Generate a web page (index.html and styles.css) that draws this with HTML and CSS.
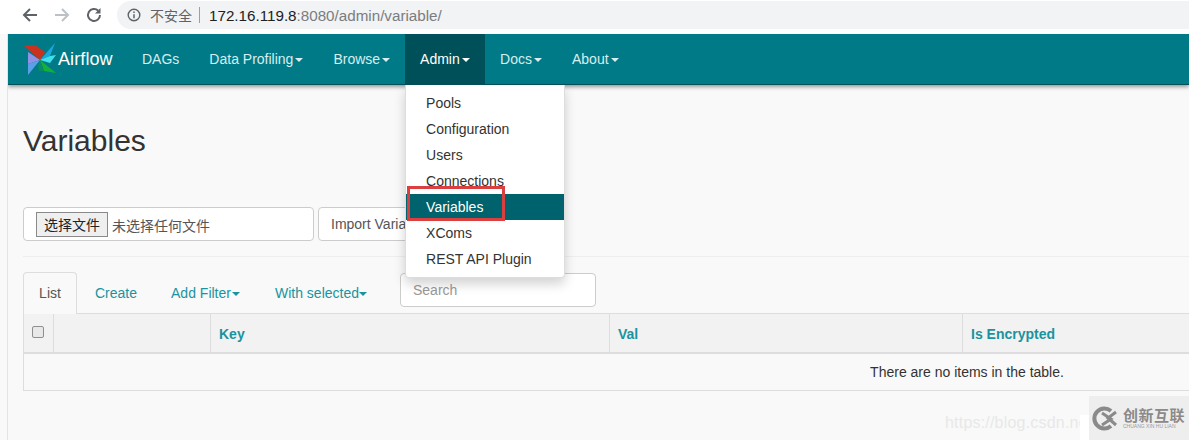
FILE: index.html
```html
<!DOCTYPE html>
<html lang="en">
<head>
<meta charset="utf-8">
<title>Airflow Variables</title>
<link rel="stylesheet" href="styles.css">
</head>
<body>
<header class="chrome">
  <svg class="cicon" width="18" height="18" viewBox="0 0 18 18"><path d="M16 9H3M9 3L3 9l6 6" fill="none" stroke="#5f6368" stroke-width="2"/></svg>
  <svg class="cicon" width="18" height="18" viewBox="0 0 18 18"><path d="M2 9h13M9 3l6 6-6 6" fill="none" stroke="#bdc1c6" stroke-width="2"/></svg>
  <svg class="cicon" width="18" height="18" viewBox="0 0 18 18"><path d="M15 9a6 6 0 1 1-1.800-4.300" fill="none" stroke="#5f6368" stroke-width="2"/><path d="M15.500 2v5.500H10z" fill="#5f6368"/></svg>
  <div class="omnibox">
    <svg width="14" height="14" viewBox="0 0 14 14"><circle cx="7" cy="7" r="5.800" fill="none" stroke="#5f6368" stroke-width="1.400"/><path d="M7 6.200v4M7 3.600v1.500" stroke="#5f6368" stroke-width="1.500"/></svg>
    <span class="insecure">不安全</span>
    <span class="sep"></span>
    <span class="url"><b>172.16.119.8</b>:8080/admin/variable/</span>
  </div>
</header>

<div class="page">
  <nav class="navbar">
    <a class="brand">
      <svg width="35" height="34" viewBox="0 0 35 34">
        <path d="M1 4l11-1 10 7-5 8z" fill="#c8321f"/>
        <path d="M32 1l-5 13-10 4z" fill="#19a9dc"/>
        <path d="M17 18l10-4 6-1-6 8z" fill="#3fe0ea"/>
        <path d="M17 18l16 13-12-2z" fill="#12b03c"/>
        <path d="M17 18l4 11-5 0-1-5z" fill="#0b8a6a"/>
        <path d="M17 18L5 33V22z" fill="#5aa0e8"/>
        <path d="M17 18L5 22V10z" fill="#8f93e8"/>
      </svg>
      <span>Airflow</span>
    </a>
    <a class="nav-item">DAGs</a>
    <a class="nav-item">Data Profiling<i class="caret"></i></a>
    <a class="nav-item">Browse<i class="caret"></i></a>
    <div class="nav-item open">Admin<i class="caret"></i>
      <ul class="dropdown">
        <li>Pools</li>
        <li>Configuration</li>
        <li>Users</li>
        <li>Connections</li>
        <li class="active">Variables</li>
        <li>XComs</li>
        <li>REST API Plugin</li>
      </ul>
      <div class="callout"></div>
    </div>
    <a class="nav-item">Docs<i class="caret"></i></a>
    <a class="nav-item">About<i class="caret"></i></a>
  </nav>

  <main class="content">
    <h1>Variables</h1>
    <form class="import">
      <div class="file-box"><span class="file-btn">选择文件</span><span class="file-name">未选择任何文件</span></div>
      <div class="import-btn">Import Variables</div>
    </form>
    <hr>
    <div class="tabs">
      <a class="tab active">List</a>
      <a class="tab create">Create</a>
      <a class="tab filter">Add Filter<i class="caret"></i></a>
      <a class="tab selected">With selected<i class="caret"></i></a>
      <div class="search">Search</div>
    </div>
    <table>
      <colgroup><col class="c1"><col class="c2"><col class="c3"><col class="c4"><col></colgroup>
      <thead>
        <tr><th><span class="check"></span></th><th></th><th>Key</th><th>Val</th><th>Is Encrypted</th></tr>
      </thead>
      <tbody>
        <tr><td colspan="5">There are no items in the table.</td></tr>
      </tbody>
    </table>
  </main>
</div>

<div class="wm-text">https://blog.csdn.ne</div>
<div class="wm-patch"></div>
<div class="wm-logo">
  <svg width="27" height="27" viewBox="0 0 27 27"><path d="M19 6a10 10 0 1 0 0 15" fill="none" stroke="#8a8a8a" stroke-width="4"/><path d="M10 8l9 6-9 6M24 7l-8 6 8 7" fill="none" stroke="#8a8a8a" stroke-width="3"/></svg>
  <div class="wm-words"><span class="wm-cn">创新互联</span><span class="wm-en">CHUANG XIN HU LIAN</span></div>
</div>
</body>
</html>
```
FILE: styles.css
```css
* { box-sizing: border-box; }
html, body { margin: 0; height: 440px; overflow: hidden; }
body { background: #f9f9f9; font-family: "Liberation Sans", Arial, sans-serif; font-size: 14px; color: #333; position: relative; width: 1189px; }

.chrome { height: 34px; background: #fff; display: flex; align-items: flex-start; padding: 6px 0 0 21px; gap: 14px; }
.cicon { flex: none; }
.omnibox { margin: -5px 0 0 0; flex: 1; height: 28px; background: #f1f3f4; border-radius: 14px 0 0 14px; display: flex; align-items: center; padding-left: 10px; }
.insecure { margin-left: 9px; font-family: "Noto Sans CJK SC", sans-serif; font-size: 14px; color: #5f6368; }
.sep { width: 1px; height: 16px; background: #9aa0a6; margin: 0 9px 0 7px; }
.url { color: #7a7d80; font-size: 15.200px; }
.url b { font-weight: normal; color: #202124; }

.page { margin-left: 8px; height: 406px; overflow: hidden; box-shadow: -1px 0 0 #e4e4e4; }

.navbar { height: 51px; background: #007a87; display: flex; color: #d6eef0; box-shadow: 0 2px 4px rgba(0,0,0,.4); border-bottom: 1px solid #00505a; position: relative; }
.brand { width: 119px; display: flex; align-items: center; padding-left: 15px; color: #fff; font-size: 18px; }
.brand svg { flex: none; }
.brand span { letter-spacing: .1px; }
.nav-item { padding: 0 15px; line-height: 50px; white-space: nowrap; position: relative; height: 50px; }
.nav-item.open { background: #00505a; color: #fff; width: 80px; }
.caret { display: inline-block; width: 0; height: 0; margin-left: 2px; vertical-align: middle; border-top: 4px solid; border-left: 4px solid transparent; border-right: 4px solid transparent; }

.dropdown { position: absolute; top: 51px; left: 0; width: 160px; height: 193px; margin: 0; padding: 5px 0; list-style: none; background: #fff; border: 1px solid #ddd; border-top: 0; border-radius: 0 0 4px 4px; box-shadow: 0 6px 12px rgba(0,0,0,.175); z-index: 5; color: #333; }
.dropdown li { height: 26px; line-height: 26px; padding-left: 20px; }
.dropdown li.active { background: #00626c; color: #fff; }
.callout { position: absolute; top: 152px; left: 2px; width: 98px; height: 35px; border: 3px solid #d9403f; z-index: 6; }

.content { padding: 0 0 0 15px; width: 1900px; }
h1 { margin: 0; padding-top: 38px; height: 122px; font-size: 30px; line-height: 36px; font-weight: 500; color: #333; }

.import { display: flex; gap: 4px; height: 34px; }
.file-box { width: 291px; background: #fff; border: 1px solid #ccc; border-radius: 4px; display: flex; align-items: center; padding-left: 12px; font-family: "Noto Sans CJK SC", sans-serif; font-size: 14px; color: #555; }
.file-btn { width: 72px; height: 25px; line-height: 23px; text-align: center; background: #efefef; border: 1px solid #8a8a8a; color: #222; margin-right: 4px; margin-top: 1px; }
.file-name { padding-top: 1px; }
.import-btn { width: 200px; background: #fff; border: 1px solid #ccc; border-radius: 4px; line-height: 32px; padding-left: 12px; color: #555; }

hr { margin: 15px 0 15px; border: 0; border-top: 1px solid #eee; height: 1px; }

.tabs { height: 42px; display: flex; position: relative; border-bottom: 1px solid #ddd; margin-bottom: -1px; }
.tab { color: #1a939f; line-height: 42px; white-space: nowrap; }
.tab .caret { margin-left: 1px; }
.tab.selected .caret { margin-left: 0; }
.tab.active { width: 54px; height: 42px; text-align: center; color: #555; background: #f9f9f9; border: 1px solid #ddd; border-bottom: 0; border-radius: 4px 4px 0 0; line-height: 41px; position: relative; z-index: 1; }
.tab.create { margin-left: 18px; }
.tab.filter { margin-left: 34px; }
.tab.selected { margin-left: 35px; }
.search { width: 196px; height: 34px; margin: 1px 0 0 33px; background: #fff; border: 1px solid #ccc; border-radius: 4px; padding-left: 12px; line-height: 32px; color: #999; }

table { width: 1888px; table-layout: fixed; border-collapse: collapse; border: 1px solid #ddd; }
.c1 { width: 30px; } .c2 { width: 157px; } .c3 { width: 399px; } .c4 { width: 353px; }
th { height: 39px; background: #f2f2f2; border: 1px solid #ddd; border-bottom: 2px solid #ddd; text-align: left; padding: 2px 8px 0; color: #1a939f; font-weight: bold; }
td { height: 38px; text-align: center; padding: 0; color: #333; }
.check { display: block; width: 12px; height: 12px; margin: -3px 0 0 0; background: #e8e8e8; border: 1px solid #8f8f8f; border-radius: 2px; }

.wm-text { position: absolute; left: 945px; top: 414px; color: #e8e8e8; font-size: 16px; letter-spacing: .2px; }
.wm-patch { position: absolute; left: 1080px; top: 415px; width: 10px; height: 25px; background: #fff; }
.wm-logo { position: absolute; left: 1089px; top: 396px; width: 100px; height: 44px; background: #eee; display: flex; align-items: center; padding-left: 3px; gap: 4px; }
.wm-words { display: flex; flex-direction: column; }
.wm-cn { font-family: "Noto Sans CJK SC", sans-serif; font-size: 15px; line-height: 16px; color: #8a8a8a; font-weight: 700; letter-spacing: .500px; }
.wm-en { font-size: 5px; line-height: 6px; color: #9a9a9a; white-space: nowrap; }
```
